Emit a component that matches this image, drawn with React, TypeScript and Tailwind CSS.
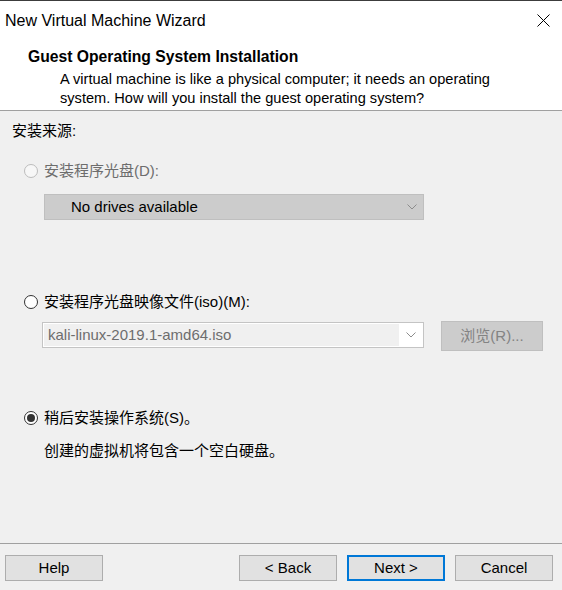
import React from "react";

const Chevron = () => (
  <svg width="10" height="6" viewBox="0 0 10 6" className="shrink-0">
    <polyline points="0.5,0.5 5,5 9.5,0.5" fill="none" stroke="#8c8c8c" strokeWidth="1" />
  </svg>
);

const Radio = ({ checked = false, disabled = false }: { checked?: boolean; disabled?: boolean }) => (
  <span
    className={
      "w-[14px] h-[14px] rounded-full border flex items-center justify-center shrink-0 " +
      (disabled ? "border-[#bcbcbc] bg-[#f7f7f7]" : "border-[#333333] bg-white")
    }
  >
    {checked && <span className="w-[8px] h-[8px] rounded-full bg-[#333333]" />}
  </span>
);

const Btn = ({ label, primary = false }: { label: string; primary?: boolean }) => (
  <div
    className={
      "h-[26px] w-[98px] flex items-center justify-center bg-[#e1e1e1] text-[15px] text-black " +
      (primary ? "border-2 border-[#0078d7]" : "border border-[#adadad]")
    }
  >
    {label}
  </div>
);

export default function App() {
  return (
    <div className="w-[562px] h-[590px] bg-[#f0f0f0] flex flex-col overflow-hidden font-['Liberation_Sans','Noto_Sans_CJK_SC',sans-serif] text-black">
      {/* Title bar */}
      <div className="h-[40px] bg-white border-t border-[#3c3c3c] flex items-center justify-between pl-[5px] pr-[12px] shrink-0">
        <span className="text-[16px] leading-[20px]">New Virtual Machine Wizard</span>
        <svg width="13" height="13" viewBox="0 0 13 13">
          <line x1="0.5" y1="0.5" x2="12.5" y2="12.5" stroke="#000" strokeWidth="1" />
          <line x1="12.5" y1="0.5" x2="0.5" y2="12.5" stroke="#000" strokeWidth="1" />
        </svg>
      </div>
      {/* Header */}
      <div className="h-[70px] bg-white pl-[28px] pt-[7px] shrink-0">
        <div className="text-[15.7px] leading-[20px] font-bold">Guest Operating System Installation</div>
        <div className="pl-[32px] mt-[3px] text-[14.6px] leading-[19px]">
          <div>A virtual machine is like a physical computer; it needs an operating</div>
          <div>system. How will you install the guest operating system?</div>
        </div>
      </div>
      <div className="h-px bg-[#a0a0a0] shrink-0" />
      {/* Body */}
      <div className="flex-1 flex flex-col text-[15px] leading-[20px]">
        <div className="pl-[12px] pt-[10px] h-[30px]">安装来源:</div>
        <div className="mt-[20px] h-[20px] flex items-center pl-[24px] gap-[6px] text-[#6d6d6d]">
          <Radio disabled />
          <span>安装程序光盘(D):</span>
        </div>
        <div className="mt-[13px] ml-[44px] w-[380px] h-[26px] bg-[#cccccc] border border-[#bfbfbf] flex items-center justify-between pl-[26px] pr-[6px]">
          <span className="text-black">No drives available</span>
          <Chevron />
        </div>
        <div className="mt-[72px] h-[20px] flex items-center pl-[24px] gap-[6px]">
          <Radio />
          <span>安装程序光盘映像文件(iso)(M):</span>
        </div>
        <div className="mt-[9px] flex items-start pl-[42px]">
          <div className="mt-[1px] w-[382px] h-[26px] bg-white border border-[#c4c4c4] flex items-center p-[1px]">
            <div className="flex-1 h-full bg-[#f0f0f0] flex items-center pl-[4px] text-[#6d6d6d]">
              kali-linux-2019.1-amd64.iso
            </div>
            <div className="w-[23px] h-full flex items-center justify-center">
              <Chevron />
            </div>
          </div>
          <div className="ml-[17px] w-[102px] h-[30px] bg-[#cccccc] border border-[#bfbfbf] flex items-center justify-center text-[#838383]">
            浏览(R)...
          </div>
        </div>
        <div className="mt-[57px] h-[20px] flex items-center pl-[24px] gap-[6px]">
          <Radio checked />
          <span>稍后安装操作系统(S)。</span>
        </div>
        <div className="mt-[13px] h-[20px] pl-[44px]">创建的虚拟机将包含一个空白硬盘。</div>
      </div>
      {/* Footer */}
      <div className="h-[47px] shrink-0 flex flex-col">
        <div className="h-px bg-[#a0a0a0]" />
        <div className="mt-[11px] flex items-center pl-[5px]">
          <Btn label="Help" />
          <div className="ml-[136px]">
            <Btn label="< Back" />
          </div>
          <div className="ml-[10px]">
            <Btn label="Next >" primary />
          </div>
          <div className="ml-[10px]">
            <Btn label="Cancel" />
          </div>
        </div>
      </div>
    </div>
  );
}
